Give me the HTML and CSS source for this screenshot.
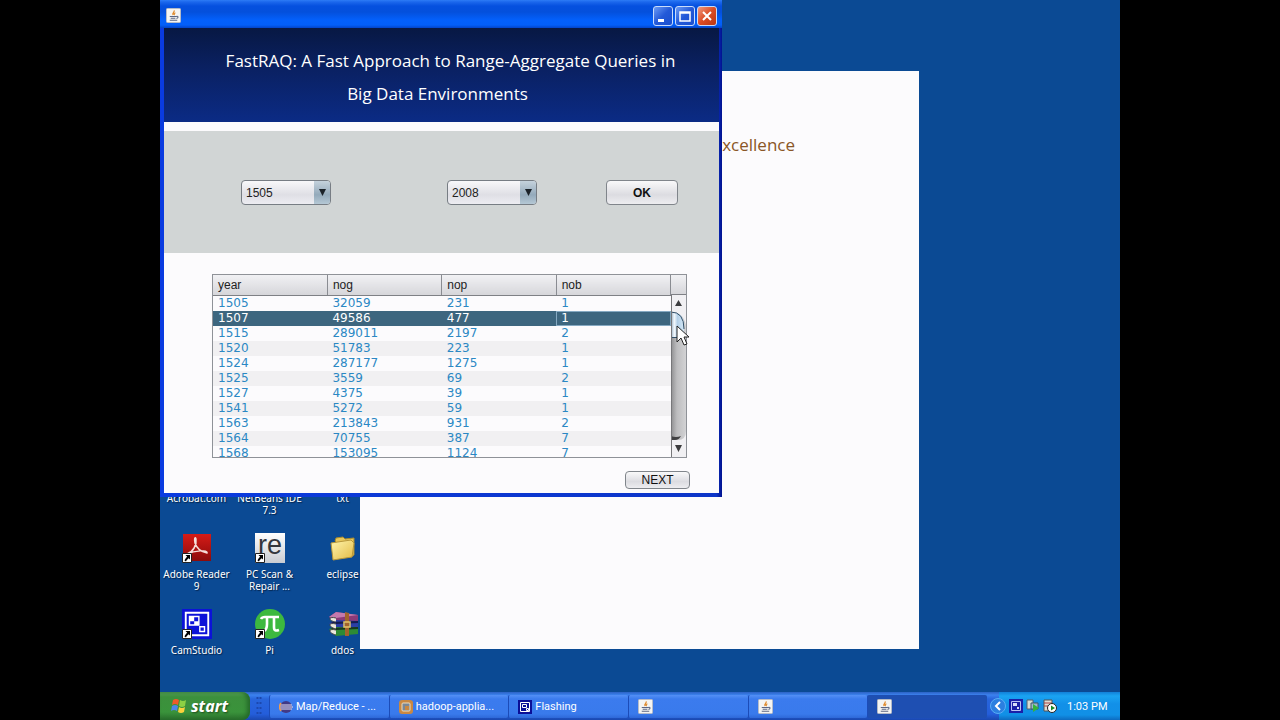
FILE: index.html
```html
<!DOCTYPE html>
<html lang="en">
<head>
<meta charset="utf-8">
<title>FastRAQ</title>
<link rel="stylesheet" href="styles.css">
</head>
<body>
<svg class="defs" aria-hidden="true">
  <symbol id="java" viewBox="0 0 16 16">
    <rect x="0.5" y="0.5" width="15" height="15" rx="1" fill="#f4f4f2" stroke="#b9bcc4"/>
    <path d="M8.5 2.5c1.5 1.6-2.6 2.6-1 5M10 5c-1.6.8-1.8 1.4-.8 2.6" fill="none" stroke="#e08a2c" stroke-width="1.3"/>
    <path d="M4 9h7M5 11h5M4 13h8M11 9c2.6-.6 2.4 1.8.2 2.2" fill="none" stroke="#5b6683" stroke-width="1.1"/>
  </symbol>
  <symbol id="cam" viewBox="0 0 32 32">
    <path fill="#0c12d8" d="M0 0h32v32H0z"/>
    <path d="M4 4h24v24H4z" fill="none" stroke="#fff" stroke-width="2"/>
    <path d="M8 8h10v9H8zM19 19h5v5h-5z" fill="#0c12d8" stroke="#fff" stroke-width="1.5"/>
    <path fill="#fff" d="M8 8h5v5H8zM13 13h5v4h-5z"/>
  </symbol>
  <symbol id="shortcut" viewBox="0 0 10 10">
    <path d="M.5.5h9v9h-9z" fill="#fff" stroke="#222"/>
    <path d="M3.500 2h4.500v4.500L6.700 5.200C5.500 6 4.500 7 4 8.500L2.500 7.500C3 6 4 4.800 5.200 3.700z" fill="#000"/>
  </symbol>
</svg>

<div class="screen">
  <main class="desktop">
    <ul class="icons">
      <li><span>Acrobat.com</span></li>
      <li><span>NetBeans IDE 7.3</span></li>
      <li><span>txt</span></li>
      <li>
        <svg width="32" height="32" viewBox="0 0 32 32">
          <defs><linearGradient id="red" x2="0" y2="1"><stop stop-color="#d61b17"/><stop offset="1" stop-color="#8c0b0b"/></linearGradient></defs>
          <path fill="url(#red)" d="M2 2h28v27H2z"/>
          <path d="M6 22c6-2 10-9 9-15-1-3-2 0-1 4 2 6 6 9 12 10 1-3-12-3-20 1z" fill="none" stroke="#f6dcd8" stroke-width="1.500"/>
          <use href="#shortcut" x="1" y="21" width="10" height="10"/>
        </svg>
        <span>Adobe Reader 9</span>
      </li>
      <li>
        <svg class="lettered" width="32" height="32" viewBox="0 0 32 32">
          <defs><linearGradient id="silver" x2="0" y2="1"><stop stop-color="#fff"/><stop offset="1" stop-color="#c9ccd2"/></linearGradient></defs>
          <path fill="url(#silver)" d="M1 1h30v30H1z"/>
          <text class="re" x="16" y="22" text-anchor="middle">re</text>
          <use href="#shortcut" x="1" y="21" width="10" height="10"/>
        </svg>
        <span>PC Scan &amp; Repair ...</span>
      </li>
      <li>
        <svg width="32" height="32" viewBox="0 0 32 32">
          <defs><linearGradient id="yellow" x2="1" y2="1"><stop stop-color="#fff5ae"/><stop offset="1" stop-color="#e3bb45"/></linearGradient></defs>
          <path fill="#e8c85c" stroke="#a88a2c" d="M8 9l1-3 7-1 2 2 9-1v17l-3 2z"/>
          <path fill="url(#yellow)" stroke="#b7973a" d="M4 11l20-3 3 3-2 14-19 3z"/>
        </svg>
        <span>eclipse</span>
      </li>
      <li>
        <svg width="32" height="32" viewBox="0 0 32 32">
          <use href="#cam" x="1" y="1" width="30" height="30"/>
          <use href="#shortcut" x="1" y="21" width="10" height="10"/>
        </svg>
        <span>CamStudio</span>
      </li>
      <li>
        <svg width="32" height="32" viewBox="0 0 32 32">
          <circle cx="16" cy="16" r="15" fill="#3db93f"/>
          <path d="M7 11c1-2 2-2 4-2h14M13 9v7c0 4-1 6-3 7M20 9v10c0 4 2 4 5 3" fill="none" stroke="#fff" stroke-width="2.600"/>
          <use href="#shortcut" x="1" y="21" width="10" height="10"/>
        </svg>
        <span>Pi</span>
      </li>
      <li>
        <svg width="32" height="32" viewBox="0 0 32 32">
          <path fill="#8b3a78" d="M2 9l7-5 22 3v6l-22 1z"/><path fill="#c479ad" d="M2 9l7-5 22 3-22 3z"/>
          <path fill="#2b3fa5" d="M2 15l7-3 22 1v6l-22 2z"/><path fill="#151c50" d="M3 14l28-1v2l-22 1z"/>
          <path fill="#2d8b35" d="M2 21l7-2 22 1v6L9 28z"/><path fill="#18391c" d="M3 20l28-1v2l-22 1z"/>
          <path d="M9 10c-8-2-8 3 0 4M9 16c-8-2-8 3 0 5M9 22c-8-2-8 3 0 5" fill="#ece8dc" stroke="#444"/>
          <path fill="#a2642c" d="M18 4l4 1v23h-4z"/><path fill="none" stroke="#e2c468" stroke-width="1.500" d="M17 14h6v5h-6z"/>
        </svg>
        <span>ddos</span>
      </li>
    </ul>

    <section class="splash"><p>Excellence</p></section>

    <section class="window">
      <header class="titlebar">
        <svg width="15" height="15"><use href="#java"/></svg>
        <div class="controls">
          <button aria-label="Minimize"><svg width="18" height="18"><path d="M4 12h6v3H4z" fill="#fff"/></svg></button>
          <button aria-label="Maximize"><svg width="18" height="18"><path d="M4 5h10v9H4zM4 6h10" fill="none" stroke="#fff" stroke-width="1.500"/></svg></button>
          <button class="close" aria-label="Close"><svg width="18" height="18"><path d="M5 5l8 8M13 5l-8 8" stroke="#fff" stroke-width="2"/></svg></button>
        </div>
      </header>
      <h1 class="banner">
        <span class="line-one">FastRAQ: A Fast Approach to Range-Aggregate Queries in</span>
        <span class="line-two">Big Data Environments</span>
      </h1>
      <form class="range">
        <div class="combo">
          <select aria-label="From year"><option>1505</option></select>
          <svg width="16" height="23"><path d="M5 8h7l-3.500 7z" fill="#1b2229"/></svg>
        </div>
        <div class="combo to">
          <select aria-label="To year"><option>2008</option></select>
          <svg width="16" height="23"><path d="M5 8h7l-3.500 7z" fill="#1b2229"/></svg>
        </div>
        <button class="btn ok" type="button">OK</button>
      </form>
      <div class="results">
        <div class="grid">
          <table>
            <thead><tr><th>year</th><th>nog</th><th>nop</th><th>nob</th></tr></thead>
            <tbody>
              <tr><td>1505</td><td>32059</td><td>231</td><td>1</td></tr>
              <tr class="selected"><td>1507</td><td>49586</td><td>477</td><td>1</td></tr>
              <tr><td>1515</td><td>289011</td><td>2197</td><td>2</td></tr>
              <tr><td>1520</td><td>51783</td><td>223</td><td>1</td></tr>
              <tr><td>1524</td><td>287177</td><td>1275</td><td>1</td></tr>
              <tr><td>1525</td><td>3559</td><td>69</td><td>2</td></tr>
              <tr><td>1527</td><td>4375</td><td>39</td><td>1</td></tr>
              <tr><td>1541</td><td>5272</td><td>59</td><td>1</td></tr>
              <tr><td>1563</td><td>213843</td><td>931</td><td>2</td></tr>
              <tr><td>1564</td><td>70755</td><td>387</td><td>7</td></tr>
              <tr><td>1568</td><td>153095</td><td>1124</td><td>7</td></tr>
            </tbody>
          </table>
          <div class="scroll">
            <div class="corner"></div>
            <svg width="15" height="162" viewBox="0 0 15 162">
              <defs>
                <linearGradient id="track"><stop stop-color="#8e8e90"/><stop offset=".4" stop-color="#bdbdbf"/><stop offset="1" stop-color="#d2d2d4"/></linearGradient>
                <linearGradient id="thumb"><stop stop-color="#8fa9c0"/><stop offset=".25" stop-color="#f4f9fd"/><stop offset=".5" stop-color="#b4d0e8"/><stop offset="1" stop-color="#d5e8f6"/></linearGradient>
              </defs>
              <path fill="#f1f0f3" d="M0 0h15v162H0z"/>
              <path fill="url(#track)" d="M0 16h15v120q0 9-8 9H0z"/>
              <path fill="#414143" d="M0 141q5 2 10 0-2 4-6 4H0z"/>
              <path fill="#f1f0f3" d="M0 0h15v30Q12 17 0 17z"/>
              <path fill="url(#thumb)" d="M0 17q13 0 13 14v12H0z"/>
              <path fill="none" stroke="#314f68" d="M0 17q13 0 13 17M0 42.500h8"/>
              <path fill="#3c3c3e" d="M4 11h7L7.500 5zM4 150h7l-3.500 7z"/>
              <path stroke="#77777a" d="M.5 0v162"/>
            </svg>
          </div>
        </div>
        <button class="btn next" type="button">NEXT</button>
      </div>
    </section>
    <svg class="pointer" width="13" height="21" viewBox="0 0 13 21"><path d="M1 1v16l4-4 3 7 3-1-3-7h5z" fill="#fff" stroke="#222"/></svg>
  </main>

  <footer class="taskbar">
    <button class="start">
      <svg width="18" height="18" viewBox="0 0 18 18">
        <path fill="#ee5a2a" d="M3 3q3-2 6 0L8 8Q5 6 2 8z"/><path fill="#8bd044" d="M10 3q3 2 6 0l-1 6q-3 2-6 0z"/>
        <path fill="#4c86ea" d="M2 9q3-2 6 0l-1 5q-3-2-6 0z"/><path fill="#fbd13c" d="M9 10q3 2 6 0l-1 5q-3 2-6 0z"/>
      </svg>
      <span>start</span>
    </button>
    <svg class="grip" width="6" height="20"><path d="M1.500 1v19M4.500 1v19" stroke="#1c48ae" stroke-width="2" stroke-dasharray="2 3"/></svg>
    <nav class="tasks">
      <button>
        <svg width="14" height="14" viewBox="0 0 14 14"><circle cx="7" cy="7" r="6" fill="#423a86"/><path d="M1 5h12M0 7h14M1 9h12" stroke="#e9e5f5"/><path d="M2 3Q-1 7 2 11" fill="none" stroke="#ed9b54" stroke-width="1.500"/></svg>
        Map/Reduce - ...
      </button>
      <button>
        <svg width="14" height="14" viewBox="0 0 14 14"><rect width="14" height="14" rx="3" fill="#c98842"/><rect x="3" y="3" width="8" height="8" rx="1" fill="#7b8795" stroke="#f0ddbd"/><path d="M6 6h4v4H6z" fill="#c98842"/></svg>
        hadoop-applia...
      </button>
      <button>
        <svg width="14" height="14" viewBox="0 0 14 14"><path fill="#0b0f96" d="M0 0h14v14H0z"/><path d="M2.500 2.500h9v9h-9zM4.500 4.500h4v3h-4zM8.500 8.500h2v2h-2z" fill="none" stroke="#fff"/></svg>
        Flashing
      </button>
      <button aria-label="Java application"><svg width="15" height="15"><use href="#java"/></svg></button>
      <button aria-label="Java application"><svg width="15" height="15"><use href="#java"/></svg></button>
      <button class="active" aria-label="Java application"><svg width="15" height="15"><use href="#java"/></svg></button>
    </nav>
    <div class="tray">
      <svg class="chevron" width="16" height="16" viewBox="0 0 16 16"><circle cx="8" cy="8" r="7.500" fill="#2b7fe0" stroke="#58aef5"/><path d="M10 4L6 8l4 4" fill="none" stroke="#fff" stroke-width="2"/></svg>
      <svg width="14" height="14" viewBox="0 0 14 14"><path fill="#1a1fa8" d="M0 0h14v14H0z"/><path d="M2.500 2.500h9v9h-9z" fill="none" stroke="#b9c1f5"/><path d="M4 4h4v3H4zM8 8h2v2H8z" fill="#d9def9"/></svg>
      <svg width="14" height="14" viewBox="0 0 14 14"><path d="M1 1h6v9H1z" fill="#d7dad1" stroke="#54606c"/><path d="M5 4h7v6H5z" fill="#9fb8c8" stroke="#405468"/><path d="M7 5l6 4-6 4z" fill="#35b33a"/></svg>
      <svg width="14" height="14" viewBox="0 0 14 14"><path d="M1 1h8v11H1z" fill="#dedbd3" stroke="#555"/><path d="M1 4h8M1 7h8" stroke="#a44"/><circle cx="9" cy="9" r="4.500" fill="#fff" stroke="#222"/><path d="M8 6.500l4 2.500-4 2.500z" fill="#198a22"/></svg>
      <time>1:03 PM</time>
    </div>
  </footer>
</div>
</body>
</html>
```
FILE: styles.css
```css
* { box-sizing: border-box; }
body {
  margin: 0;
  background: #000;
  font-family: Roboto, sans-serif;
  font-size: 11px;
}
button, select { font: inherit; margin: 0; }
button { padding: 0; border: 0; cursor: default; }
svg { display: block; flex: none; }
.defs { position: absolute; width: 0; height: 0; }

.screen {
  width: 75%;
  min-height: 100vh;
  margin: 0 auto;
  display: flex;
  flex-direction: column;
  background: #0b4a94;
}
.desktop { position: relative; flex: 1; overflow: hidden; }

.icons {
  list-style: none;
  margin: 0;
  padding: 492px 0 0;
  display: grid;
  grid-template-columns: repeat(3, 73px);
  gap: 16px 0;
}
.icons li {
  display: flex;
  flex-direction: column;
  align-items: center;
  gap: 4px;
  color: #fff;
  font-family: "Noto Sans", sans-serif;
  font-size: 10px;
  line-height: 12px;
  text-align: center;
  text-shadow: 1px 1px 1px #05234a;
}
.lettered { overflow: visible; }
.re {
  fill: #33363c;
  font: 27px "Liberation Sans", sans-serif;
  text-shadow: none;
}

.splash {
  position: absolute;
  top: 71px;
  left: 200px;
  width: 559px;
  height: 578px;
  padding: 62px 124px 0 0;
  background: #fcfbfd;
  color: #8a5626;
  font-family: "Open Sans", sans-serif;
  font-size: 17px;
  line-height: 24px;
  text-align: right;
}
.splash p { margin: 0; }

.window {
  position: absolute;
  top: 0;
  left: 0;
  width: 562px;
  padding: 0 3px 4px 4px;
  background: linear-gradient(90deg, #0a3be0, #0d35c8 99%, #02128f);
}
.titlebar {
  display: flex;
  align-items: center;
  justify-content: space-between;
  height: 28px;
  margin: 0 -3px 0 -4px;
  padding: 3px 5px 0 6px;
  background: linear-gradient(#2d7cf6 0, #1b67ec 2px, #0550df 6px, #0450dc 12px, #0360fb 20px, #035ff8 25px, #0344c8);
}
.controls { display: flex; gap: 2px; }
.controls button {
  width: 20px;
  height: 20px;
  border: 1px solid #c9dcfb;
  border-radius: 3px;
  background: linear-gradient(135deg, #6b9bf5, #2359d8 50%, #1a4fce);
}
.controls .close { background: linear-gradient(135deg, #f09a80, #db4c25 50%, #bb3612); }

.banner {
  margin: 0;
  padding: 16px 0 12px;
  background: linear-gradient(#071843, #0a2060 40%, #0b2b85);
  color: #fff;
  font-family: "Open Sans", sans-serif;
  font-size: 17px;
  font-weight: 400;
  line-height: 33px;
  text-align: center;
  white-space: nowrap;
}
.banner span { display: block; }
.line-one { padding-left: 18px; }
.line-two { padding-right: 8px; }

.range {
  display: flex;
  padding: 49px 40px 48px 77px;
  border-top: 9px solid #fcfbfd;
  background: #d1d5d5;
  background-clip: padding-box;
  font-family: "Liberation Sans", sans-serif;
  font-size: 12px;
}
.combo { position: relative; width: 90px; }
.combo.to { margin: 0 69px 0 116px; }
.combo select {
  display: block;
  width: 100%;
  height: 25px;
  padding: 0 20px 0 4px;
  appearance: none;
  border: 1px solid #777d84;
  border-radius: 4px;
  background: linear-gradient(#f8f8fa, #dfdfe5 60%, #ededf2);
  color: #222;
}
.combo svg {
  position: absolute;
  top: 1px;
  right: 1px;
  border-radius: 0 3px 3px 0;
  background: linear-gradient(#c5d2dc, #94aabb 60%, #b5c8d5);
  pointer-events: none;
}
.btn {
  border: 1px solid #80858b;
  border-radius: 4px;
  background: linear-gradient(#f9f9fa, #dcdce1 60%, #ededf0);
  color: #111;
  font-family: "Liberation Sans", sans-serif;
  font-size: 12px;
}
.ok { width: 72px; height: 25px; font-weight: 700; }
.next { width: 65px; height: 18px; line-height: 16px; }

.results {
  display: flex;
  flex-direction: column;
  align-items: flex-end;
  gap: 13px;
  padding: 21px 29px 4px 48px;
  background: #fcfbfd;
}
.grid {
  display: flex;
  align-self: stretch;
  height: 184px;
  margin-right: 3px;
  border: 1px solid #8f9298;
  overflow: hidden;
}
table {
  flex: 1;
  width: 100%;
  align-self: flex-start;
  table-layout: fixed;
  border-collapse: collapse;
}
th, .corner {
  height: 20px;
  border-bottom: 1px solid #7e8085;
  background: linear-gradient(#f1f1f4, #d6d6da);
}
th {
  padding: 0 5px;
  border-right: 1px solid #8a8c92;
  color: #222;
  font: 400 12px/18px "Liberation Sans", sans-serif;
  text-align: left;
}
td {
  height: 15px;
  padding: 0 5px;
  color: #2b88c4;
  font: 400 12px/15px "DejaVu Sans", sans-serif;
}
tbody tr:nth-child(even) { background: #f1f0f2; }
tbody tr.selected { background: #3d667f; }
.selected td { color: #fff; }
.selected td:last-child { box-shadow: inset 0 0 0 1px #85a9c2; }
.scroll { flex: none; width: 15px; }

.pointer { position: absolute; left: 516px; top: 325px; }

.taskbar {
  display: flex;
  align-items: stretch;
  height: 28px;
  background: linear-gradient(#2c62c4, #3b82ef 3px, #2865dc 7px, #245edb 22px, #1a48b0);
  color: #fff;
}
.start {
  display: flex;
  align-items: center;
  gap: 3px;
  width: 90px;
  padding-left: 10px;
  border-radius: 0 8px 8px 0;
  background: linear-gradient(#5aa35a, #3c903c 5px, #3a933b 20px, #296f2c);
  box-shadow: inset -3px 0 4px #256a2a;
  color: #fff;
  font: italic 700 16px/20px "Noto Sans", sans-serif;
  text-shadow: 1px 1px 2px #1c4a1c;
}
.grip { align-self: center; margin: 0 7px 0 6px; }
.tasks { flex: 1; display: flex; padding: 3px 0 2px; }
.tasks button {
  flex: 1 1 0;
  min-width: 0;
  display: flex;
  align-items: center;
  gap: 3px;
  padding-left: 9px;
  border-left: 1px solid #1c4cb8;
  border-radius: 2px;
  background: linear-gradient(#5490f5, #3b7bee 4px, #397aec 19px, #2e68d8);
  color: #fff;
  white-space: nowrap;
}
.tasks .active { background: #1e4fb2; }
.tray {
  display: flex;
  align-items: center;
  gap: 3px;
  width: 121px;
  margin-left: 12px;
  background: linear-gradient(#1280d8, #1aa4f2 4px, #1290e8 12px, #1190e6 23px, #0d6bc0);
}
.chevron { margin-left: -9px; }
.tray time { margin-left: 7px; white-space: nowrap; }
```
